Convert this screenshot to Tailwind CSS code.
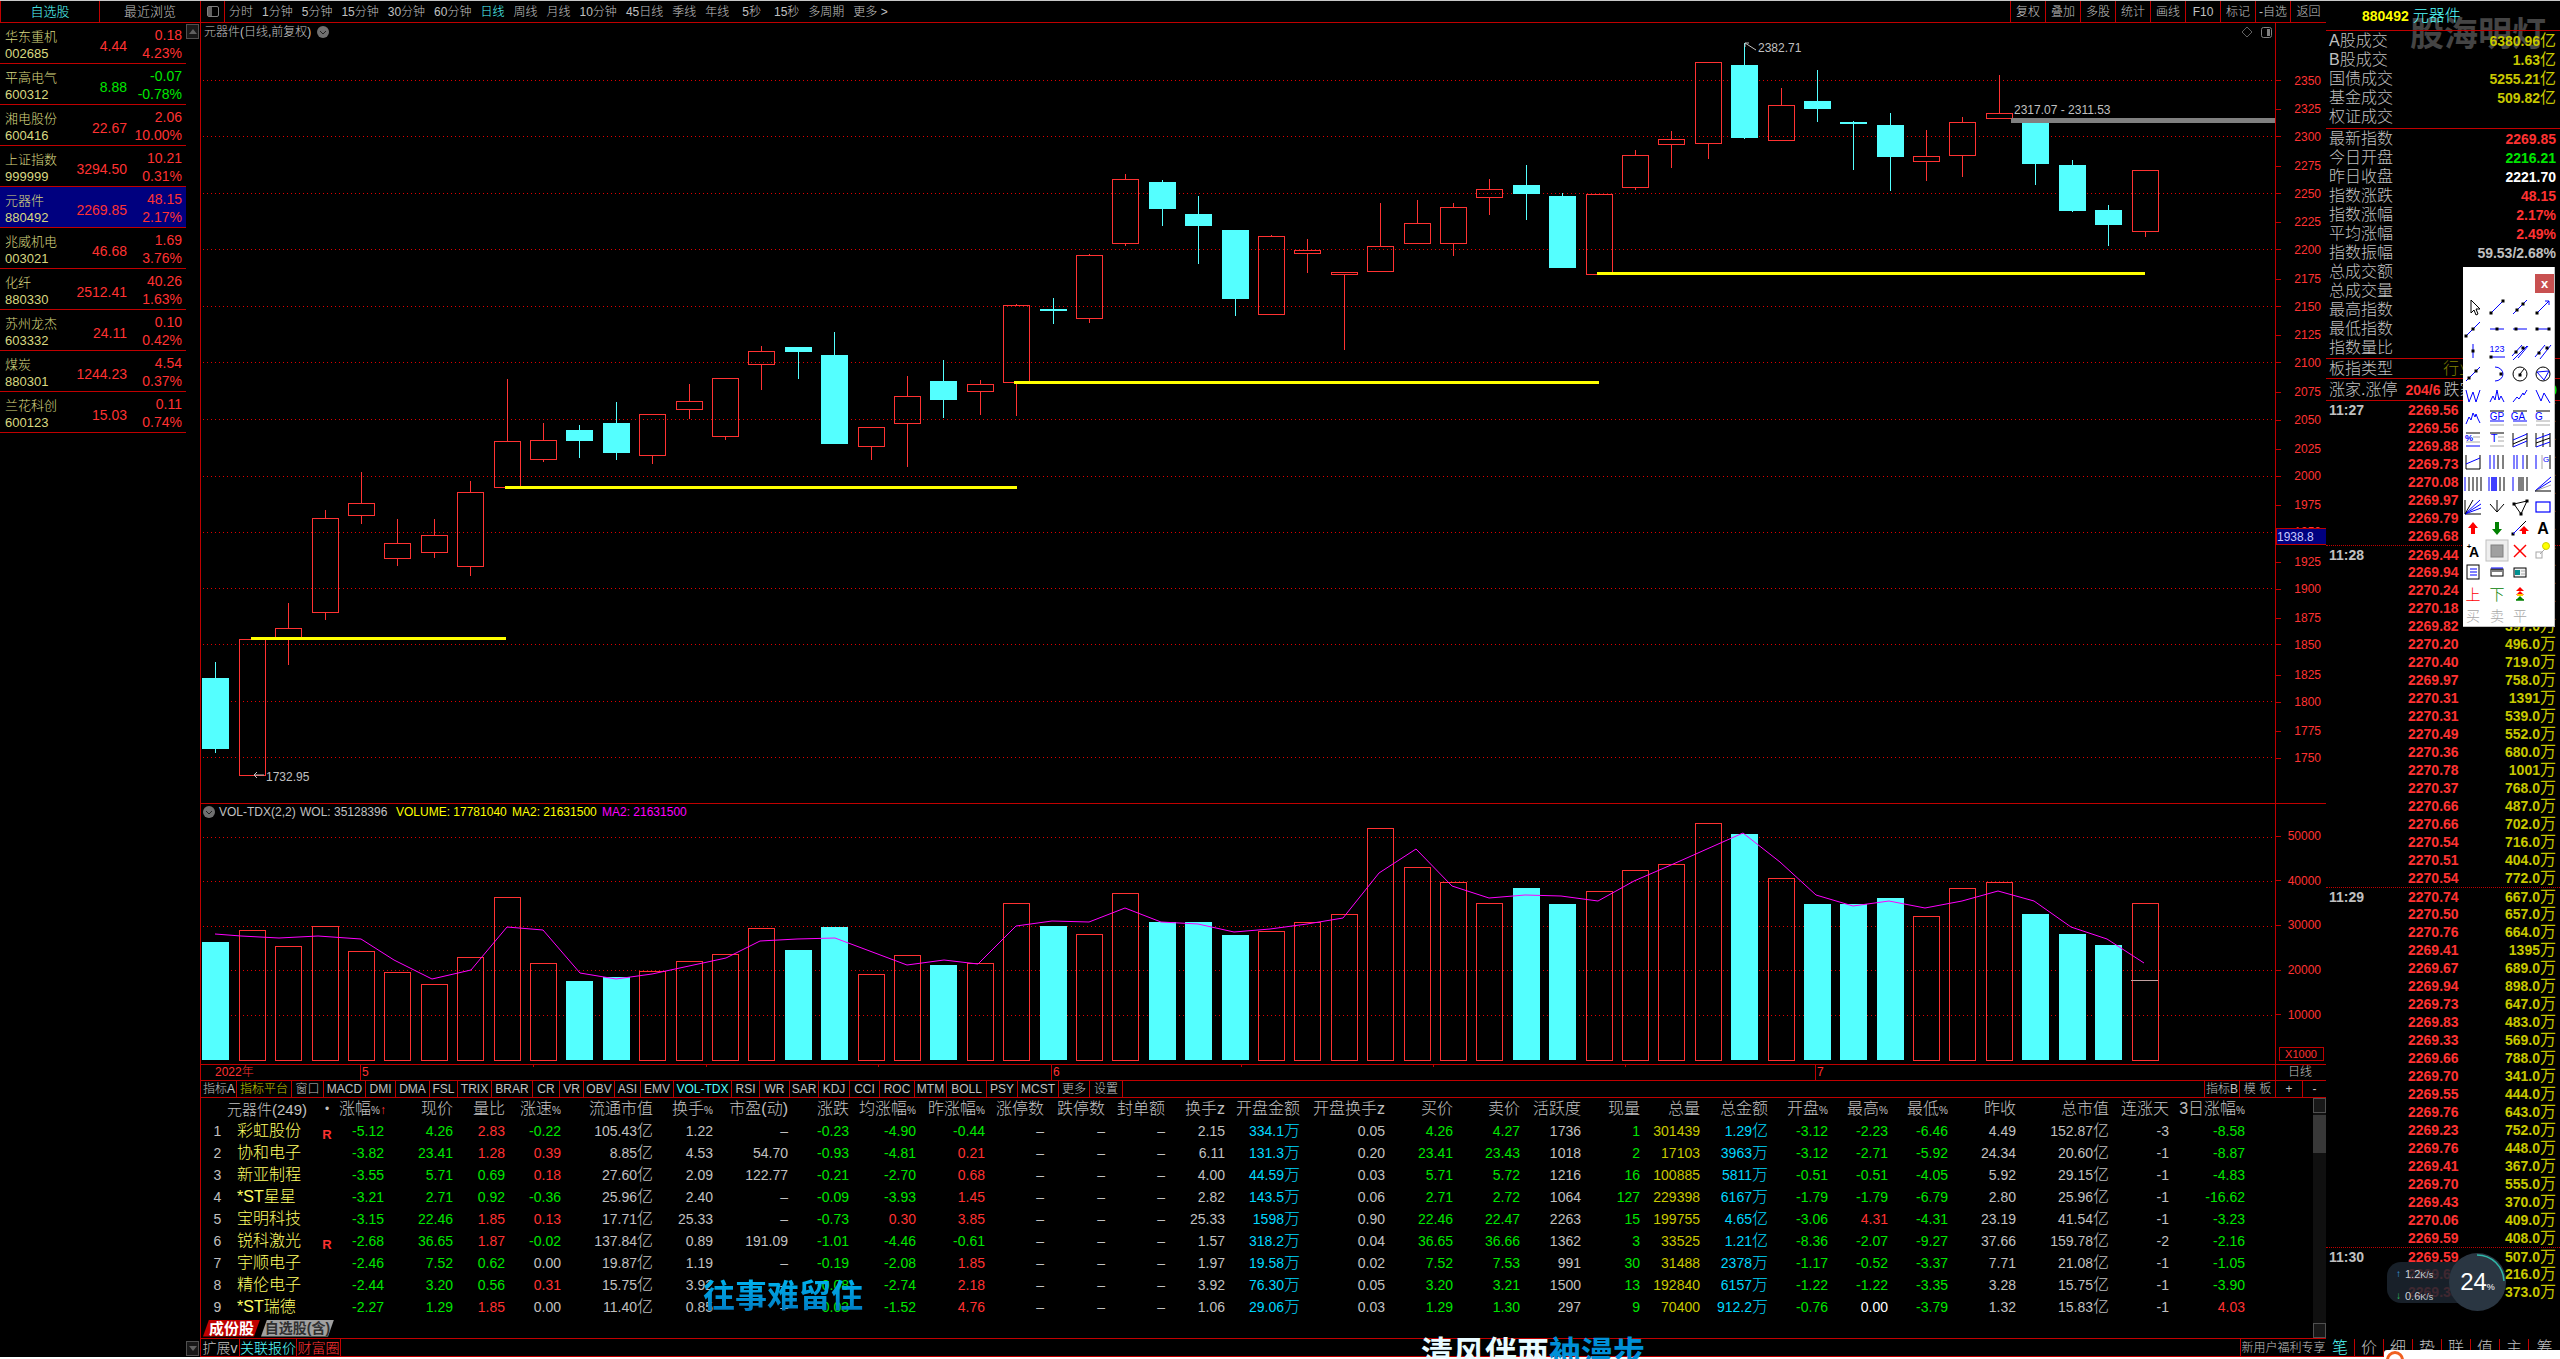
<!DOCTYPE html>
<html lang="zh-CN">
<head>
    <meta charset="UTF-8">
    <title>元器件 日线</title>
    <script src="https://cdn.jsdelivr.net/npm/@tailwindcss/browser@4"></script>
</head>
<body class="bg-black">
<div class="relative w-[2560px] h-[1359px] overflow-hidden flex flex-col bg-black text-[#c0c0c0] text-[12px] leading-none font-light font-['Liberation_Sans','Noto_Sans_CJK_SC',sans-serif]">
    <div class="h-[1px] bg-[#c8c8c8]"></div>

    <div class="flex flex-1 min-h-0">
        <!-- left: watch list -->
        <div class="w-[201px] shrink-0 flex flex-col border-r border-[#c00000]">
            <div class="flex h-[22px] shrink-0 border-b border-[#c00000] text-[13px]">
                <div class="w-[100px] flex items-center justify-center border-l border-r border-[#c00000] text-[#54ffff]">自选股</div>
                <div class="flex-1 flex items-center justify-center">最近浏览</div>
            </div>
            <div class="flex flex-1 min-h-0">
                <div id="watchList" class="w-[186px] flex flex-col"></div>
                <div class="flex-1 flex flex-col justify-between items-end">
                    <div class="w-[13px] h-[15px] mt-[1px] mr-[1px] border border-[#505050] bg-[#181818] flex items-center justify-center"><div class="w-0 h-0 border-x-[4px] border-x-transparent border-b-[5px] border-b-[#606060]"></div></div>
                    <div class="w-[13px] h-[15px] mb-[1px] mr-[1px] border border-[#505050] bg-[#181818] flex items-center justify-center"><div class="w-0 h-0 border-x-[4px] border-x-transparent border-t-[5px] border-t-[#606060]"></div></div>
                </div>
            </div>
        </div>

        <!-- center -->
        <div class="w-[2125px] shrink-0 flex flex-col border-b border-[#c00000]">
            <div class="flex items-center h-[22px] shrink-0 border-b border-[#c00000]">
                <div class="w-[24px] h-full flex items-center justify-center border-r border-[#c00000]">
                    <div class="w-[12px] h-[11px] ml-[1px] rounded-[2px] border border-[#808080] flex"><div class="w-[4px] h-full bg-[#606060]"></div></div>
                </div>
                <div class="flex items-center gap-[9px] ml-[4px]">
                    <span>分时</span><span>1分钟</span><span>5分钟</span><span>15分钟</span><span>30分钟</span><span>60分钟</span><span class="text-[#54ffff]">日线</span><span>周线</span><span>月线</span><span>10分钟</span><span>45日线</span><span>季线</span><span>年线</span><span class="ml-[4px]">5秒</span><span class="ml-[4px]">15秒</span><span>多周期</span><span>更多 &gt;</span>
                </div>
                <div class="ml-auto flex h-full">
                    <span class="w-[35px] flex items-center justify-center border-l border-[#c00000]">复权</span>
                    <span class="w-[35px] flex items-center justify-center border-l border-[#c00000]">叠加</span>
                    <span class="w-[35px] flex items-center justify-center border-l border-[#c00000]">多股</span>
                    <span class="w-[35px] flex items-center justify-center border-l border-[#c00000]">统计</span>
                    <span class="w-[35px] flex items-center justify-center border-l border-[#c00000]">画线</span>
                    <span class="w-[35px] flex items-center justify-center border-l border-[#c00000]">F10</span>
                    <span class="w-[35px] flex items-center justify-center border-l border-[#c00000]">标记</span>
                    <span class="w-[35px] flex items-center justify-center border-l border-[#c00000]">-自选</span>
                    <span class="w-[36px] flex items-center justify-center border-l border-[#c00000]">返回</span>
                </div>
            </div>

            <!-- chart canvas, svg uses page coordinates -->
            <svg id="chart" class="shrink-0 block" width="2125" height="1057" viewBox="201 23 2125 1057"></svg>

            <div id="indicatorTabs" class="flex h-[17px] shrink-0 border-t border-[#c00000] pl-[1px]"></div>

            <div id="stockTable" class="h-[221px] shrink-0 border-t border-[#c00000] relative"></div>

            <div class="flex h-[20px] shrink-0 items-center pl-[2px] gap-[1px] text-[15px] font-bold">
                <span class="w-[57px] h-[17px] bg-[#c00000] text-white flex items-center justify-center [clip-path:polygon(6px_0,100%_0,calc(100%-6px)_100%,0_100%)]">成份股</span>
                <span class="w-[73px] h-[17px] bg-[#a0a0a0] text-[#303030] flex items-center justify-center whitespace-nowrap text-[14px] [clip-path:polygon(6px_0,100%_0,calc(100%-6px)_100%,0_100%)]">自选股(含)</span>
            </div>

            <div class="flex h-[18px] shrink-0 border-t border-[#c00000] text-[16px]">
                <span class="w-[39px] flex items-center justify-center border-r border-[#c00000] text-[14px]">扩展v</span>
                <span class="w-[57px] flex items-center justify-center border-r border-[#c00000] text-[#54ffff] text-[14px]">关联报价</span>
                <span class="w-[44px] flex items-center justify-center border-r border-[#c00000] text-[#ff3232] text-[14px]">财富圈</span>
                <span class="ml-auto w-[86px] flex items-center justify-center border-l border-[#c00000] text-[12px]">新用户福利专享</span>
            </div>
        </div>

        <!-- right: index detail -->
        <div class="relative flex-1 min-w-0 flex flex-col">
            <div class="absolute left-[84px] top-[14px] text-[34px] leading-[38px] font-bold text-[#444444] whitespace-nowrap">股海明灯</div>
            <div class="relative h-[30px] shrink-0 border-b border-[#c00000] flex items-center pl-[36px] gap-[4px]">
                <span class="text-[14px] font-bold text-[#ffff00]">880492</span><span class="text-[16px] text-[#54ffff]">元器件</span>
            </div>
            <div id="infoRows" class="relative shrink-0"></div>
            <div id="minuteList" class="relative flex-1 min-h-0 overflow-hidden"></div>
            <div class="flex h-[18px] shrink-0 text-[16px] border-b border-[#c00000]">
                <span class="w-[28px] flex items-center justify-center text-[#54ffff]">笔</span>
                <span class="w-[29px] flex items-center justify-center border-l border-[#c00000]">价</span>
                <span class="w-[29px] flex items-center justify-center border-l border-[#c00000]">细</span>
                <span class="w-[29px] flex items-center justify-center border-l border-[#c00000]">势</span>
                <span class="w-[29px] flex items-center justify-center border-l border-[#c00000]">联</span>
                <span class="w-[29px] flex items-center justify-center border-l border-[#c00000]">值</span>
                <span class="w-[29px] flex items-center justify-center border-l border-[#c00000]">主</span>
                <span class="flex-1 flex items-center justify-center border-l border-[#c00000]">筹</span>
            </div>
        </div>
    </div>
    <div class="h-[2px] bg-white"></div>

    <!-- drawing toolbox -->
    <div class="absolute left-[2463px] top-[267px] w-[92px] h-[360px] bg-white border-r border-b border-[#c0c0c0]">
        <div class="absolute left-[72px] top-[7px] w-[19px] h-[19px] bg-[#c85050] text-white text-[13px] font-bold flex items-center justify-center">x</div>
        <svg id="toolIcons" class="block" width="92" height="360" viewBox="0 0 92 360"></svg>
    </div>

    <!-- lyrics overlay -->
    <div class="absolute left-[703px] top-[1279px] text-[32px] leading-[34px] font-bold whitespace-nowrap bg-linear-to-b from-[#00b4f0] to-[#0078c0] bg-clip-text text-transparent">往事难留住</div>
    <div class="absolute left-[1421px] top-[1336px] text-[32px] leading-[34px] font-bold whitespace-nowrap"><span class="text-[#e8fbff]">清风伴两</span><span class="text-[#0090d8]">袖漫步</span></div>

    <!-- network speed widget -->
    <div class="absolute left-[2387px] top-[1262px] w-[100px] h-[41px] rounded-[14px] bg-[#1c2630]/85 text-[#c8d0d8] text-[11px]">
        <div class="flex items-center gap-[4px] ml-[9px] mt-[5px] h-[14px]"><span class="text-[#3aa0e8] text-[10px] font-bold">↑</span><span>1.2<span class="text-[9px]">K/s</span></span></div>
        <div class="flex items-center gap-[4px] ml-[9px] mt-[8px] h-[14px]"><span class="text-[#30c060] text-[10px] font-bold">↓</span><span>0.6<span class="text-[9px]">K/s</span></span></div>
    </div>
    <div class="absolute left-[2449px] top-[1253px] w-[57px] h-[58px] rounded-full bg-[#2a3642] flex items-center justify-center text-white">
        <span class="text-[24px] font-light">24</span><span class="text-[9px] mt-[10px]">%</span>
        <svg class="absolute left-0 top-0" width="57" height="58" viewBox="0 0 57 58"><path d="M28 2 A27 27 0 0 1 55 28" fill="none" stroke="#2fb8a8" stroke-width="1.5"/></svg>
    </div>

    <!-- tray notification peeking in -->
    <div class="absolute left-[2384px] top-[1350px] w-[176px] h-[9px] bg-white rounded-tl-[3px] overflow-hidden">
        <div class="absolute left-[2px] top-[1px] w-[18px] h-[18px] rounded-full border-[3px] border-[#f06020]"></div>
    </div>
</div>

<script>
var RED = '#ff3232', CYAN = '#54ffff', LINE = '#c00000', GREEN = '#00e600', YEL = '#c8c800';

// ---- watch list
var watch = [
    ['华东重机','002685','4.44','0.18','4.23%',1],
    ['平高电气','600312','8.88','-0.07','-0.78%',0],
    ['湘电股份','600416','22.67','2.06','10.00%',1],
    ['上证指数','999999','3294.50','10.21','0.31%',1],
    ['元器件','880492','2269.85','48.15','2.17%',1],
    ['兆威机电','003021','46.68','1.69','3.76%',1],
    ['化纤','880330','2512.41','40.26','1.63%',1],
    ['苏州龙杰','603332','24.11','0.10','0.42%',1],
    ['煤炭','880301','1244.23','4.54','0.37%',1],
    ['兰花科创','600123','15.03','0.11','0.74%',1]
];
document.getElementById('watchList').innerHTML = watch.map(function (w, i) {
    var c = w[5] ? 'text-[#ff3232]' : 'text-[#00e600]';
    var bg = i == 4 ? 'bg-[#00007f]' : '';
    return '<div class="h-[41px] shrink-0 flex border-b border-[#c00000] ' + bg + '">' +
        '<div class="w-[70px] pl-[5px] pt-[5px] text-[#d8d880]"><div class="text-[13px] h-[18px] leading-[18px] whitespace-nowrap">' + w[0] + '</div><div class="text-[13px] h-[15px] leading-[15px]">' + w[1] + '</div></div>' +
        '<div class="w-[57px] text-right text-[14px] pt-[15px] leading-[16px] ' + c + '">' + w[2] + '</div>' +
        '<div class="flex-1 text-right pr-[4px] pt-[4px] text-[14px] ' + c + '"><div class="h-[18px] leading-[16px]">' + w[3] + '</div><div class="h-[16px] leading-[16px]">' + w[4] + '</div></div>' +
        '</div>';
}).join('');

// ---- chart
var h = '';
function ln(x1, y1, x2, y2, c, w, dash) {
    return '<line x1="' + x1 + '" y1="' + y1 + '" x2="' + x2 + '" y2="' + y2 + '" stroke="' + c + '" stroke-width="' + (w || 1) + '"' + (dash ? ' stroke-dasharray="' + dash + '"' : '') + ' shape-rendering="crispEdges"/>';
}
function tx(x, y, s, c, anchor, size) {
    return '<text x="' + x + '" y="' + y + '" fill="' + c + '" font-size="' + (size || 12) + '" dominant-baseline="central"' + (anchor ? ' text-anchor="' + anchor + '"' : '') + '>' + s + '</text>';
}
// price grid + axis
[80.5,136.5,193.5,249.5,306.5,362.5,419.5,476.5,532.5,588.5,644.5,701.5,757.5].forEach(function (y) { h += ln(203, y, 2275, y, '#e00000', 1, '1 3'); });
[837.5,881.5,926.5,970.5,1015.5].forEach(function (y) { h += ln(203, y, 2275, y, '#e00000', 1, '1 3'); });
h += ln(2275.5, 23, 2275.5, 1080, LINE);
var axis = [[2350,80.5],[2325,109],[2300,136.5],[2275,166],[2250,193.5],[2225,222],[2200,249.5],[2175,279],[2150,306.5],[2125,335],[2100,362.5],[2075,392],[2050,420],[2025,449],[2000,476],[1975,505],[1950,532],[1925,562],[1900,589],[1875,618],[1850,644.5],[1825,675],[1800,702],[1775,731],[1750,758]];
axis.forEach(function (a) {
    h += ln(2276, Math.floor(a[1]) + .5, 2281, Math.floor(a[1]) + .5, LINE);
    h += tx(2321, a[1], a[0], RED, 'end');
});
[[50000,836],[40000,880.5],[30000,925],[20000,970],[10000,1014.5]].forEach(function (a) {
    h += ln(2276, Math.floor(a[1]) + .5, 2281, Math.floor(a[1]) + .5, LINE);
    h += tx(2321, a[1], a[0], RED, 'end');
});

// candles: hi, top, bot, lo, cyan
var k = [
 [662,678,749,753,1],[638.5,638.5,775,775,0],[603,628,637,665,0],[510,518,612,620,0],[472,503,515,524,0],[519,543,558,566,0],
 [519,535,552,558,0],[481,492,566,576,0],[379,441,487,487,0],[423,440,459,462,0],[425,430,441,458,1],[402,423,453,460,1],
 [414,414,455,464,0],[384,401,409,419,0],[378,378,436,440,0],[346,351,364,390,0],[347,347,352,379,1],[332,355,444,444,1],
 [427,427,446,460,0],[376,396,423,467,0],[360,381,400,418,1],[380,384,391,415,0],[304,305,382,416,0],[298,309,311,324,1],
 [254,255,318,323,0],[174,179,243,246,0],[180,182,209,226,1],[196,214,226,264,1],[230,230,299,316,1],[235,236,314,315,0],
 [239,250,253,273,0],[272,272,274,350,0],[203,246,271,271,0],[200,223,243,243,0],[203,207,243,256,0],[179,189,197,215,0],
 [165,185,194,220,1],[193,196,268,268,1],[194,194,274,274,0],[150,155,187,190,0],[131,139,144,168,0],[62,62,143,159,0],
 [43,65,138,139,1],[88,105,140,140,0],[70,101,109,122,1],[121,122,124,170,1],[113,125,157,191,1],[130,156,161,181,0],
 [117,122,155,177,0],[75,113,118,118,0],[118,118,164,185,1],[160,165,211,212,1],[205,210,225,246,1],[170,170,231,237,0]
];
// volume bar tops
var vol = [942,930,946,926,951,972,984,957,897,963,981,977,971,961,954,928,950,927,974,955,965,963,903,926,934,893,922,922,935,931,922,914,828,867,882,903,888,904,891,870,864,823,834,878,904,904,898,916,888,882,914,934,945,903];
function cx(i) { return Math.round(215.3 + 36.4 * i); }
k.forEach(function (c, i) {
    var x = cx(i), col = c[4] ? CYAN : RED;
    h += ln(x + .5, c[0], x + .5, c[1], col);
    h += ln(x + .5, c[2], x + .5, c[3], col);
    if (c[4]) h += '<rect x="' + (x - 13) + '" y="' + c[1] + '" width="27" height="' + (c[2] - c[1]) + '" fill="' + col + '" shape-rendering="crispEdges"/>';
    else h += '<rect x="' + (x - 13 + .5) + '" y="' + (c[1] + .5) + '" width="26" height="' + (c[2] - c[1]) + '" fill="none" stroke="' + col + '" shape-rendering="crispEdges"/>';
    // volume
    var t = vol[i];
    if (c[4]) h += '<rect x="' + (x - 13) + '" y="' + t + '" width="27" height="' + (1060 - t) + '" fill="' + col + '" shape-rendering="crispEdges"/>';
    else h += '<rect x="' + (x - 13 + .5) + '" y="' + (t + .5) + '" width="26" height="' + (1060 - t) + '" fill="none" stroke="' + col + '" shape-rendering="crispEdges"/>';
});
h += ln(2131, 980.5, 2158, 980.5, '#c0a0a0');

// support lines
[[251,506,638.5],[505,1017,487.5],[1014,1599,382.5],[1597,2145,273.5]].forEach(function (s) { h += ln(s[0], s[2], s[1], s[2], '#ffff00', 3); });
h += '<rect x="2011" y="118" width="264" height="5" fill="#808080"/>';
h += tx(2014, 110, '2317.07 - 2311.53', '#c0c0c0');
h += tx(266, 777, '1732.95', '#c0c0c0') + '<path d="M264 775H254M257 772L254 775L257 778" fill="none" stroke="#c0c0c0"/>';
h += tx(1758, 48, '2382.71', '#c0c0c0') + '<path d="M1745 43L1756 50M1745 43V47M1745 43H1749" fill="none" stroke="#c0c0c0"/>';

// ma line
var ma = [[215,934],[241,936],[279,938],[318,936],[361,939],[394,960],[432,979],[471,970],[507,927],[543,930],[580,973],[616,979],[652,974],[726,958],[760,941],[797,939],[835,938],[907,965],[944,960],[978,964],[1016,926],[1052,921],[1089,922],[1125,908],[1161,922],[1198,924],[1234,932],[1270,929],[1307,924],[1343,918],[1379,873],[1416,849],[1452,886],[1489,898],[1525,895],[1561,896],[1598,901],[1634,881],[1671,865],[1707,849],[1743,833],[1780,862],[1816,895],[1853,906],[1889,901],[1925,908],[1962,901],[1998,891],[2034,901],[2071,927],[2107,939],[2144,963]];
h += '<polyline points="' + ma.map(function (p) { return p.join(','); }).join(' ') + '" fill="none" stroke="#ff00ff" stroke-width="1"/>';

// titles
h += tx(204, 32, '元器件(日线,前复权)', '#c0c0c0');
h += '<circle cx="323" cy="32" r="6" fill="#707070"/><path d="M320 31l3 3 3-3" fill="none" stroke="#202020"/>';
h += '<path d="M2247 27l5 5-5 5-5-5z" fill="none" stroke="#606060"/>';
h += '<rect x="2261.5" y="27.5" width="10" height="10" rx="2" fill="none" stroke="#808080"/><rect x="2267" y="29" width="3" height="7" fill="#808080"/>';
h += ln(201, 803.5, 2326, 803.5, LINE);
h += '<circle cx="209" cy="812" r="6" fill="#707070"/><path d="M206 811l3 3 3-3" fill="none" stroke="#202020"/>';
h += tx(219, 812, 'VOL-TDX(2,2)', '#c0c0c0') + tx(300, 812, 'WOL: 35128396', '#c0c0c0') + tx(396, 812, 'VOLUME: 17781040', '#ffff00') + tx(512, 812, 'MA2: 21631500', '#ffff00') + tx(602, 812, 'MA2: 21631500', '#ff00ff');

// price marker
h += '<rect x="2276" y="528.5" width="50" height="16" fill="#00007f" stroke="' + LINE + '" shape-rendering="crispEdges"/>';
h += tx(2277, 537, '1938.8', '#c8c8ff');
// x1000 box
h += '<rect x="2279.5" y="1047.5" width="44" height="13" fill="none" stroke="' + LINE + '"/>' + tx(2301, 1054, 'X1000', RED, 'middle', 11);

// date row
h += ln(201, 1064.5, 2326, 1064.5, LINE);
h += tx(215, 1072, '2022年', RED);
[[360,'5'],[1051,'6'],[1815,'7']].forEach(function (d) { h += ln(d[0] + .5, 1064, d[0] + .5, 1080, LINE) + tx(d[0] + 2, 1072, d[1], RED); });
[533,706,878,1241,1433,1625].forEach(function (x) { h += ln(x + .5, 1064, x + .5, 1067, LINE); });
h += tx(2300, 1072, '日线', '#c0c0c0', 'middle');
document.getElementById('chart').innerHTML = h;

// ---- indicator tabs
var tabs = [['指标A','w-[35px]'],['指标平台','w-[55px] text-[#c8c800]'],['窗口','w-[32px]'],['MACD','w-[42px]'],['DMI','w-[30px]'],['DMA','w-[34px]'],['FSL','w-[28px]'],['TRIX','w-[34px]'],['BRAR','w-[41px]'],['CR','w-[27px]'],['VR','w-[24px]'],['OBV','w-[31px]'],['ASI','w-[26px]'],['EMV','w-[33px]'],['VOL-TDX','w-[58px] text-[#54ffff]'],['RSI','w-[28px]'],['WR','w-[30px]'],['SAR','w-[29px]'],['KDJ','w-[31px]'],['CCI','w-[30px]'],['ROC','w-[35px]'],['MTM','w-[32px]'],['BOLL','w-[40px]'],['PSY','w-[31px]'],['MCST','w-[41px]'],['更多','w-[31px]'],['设置','w-[33px]']];
var tabHtml = tabs.map(function (t) {
    return '<span class="flex items-center justify-center whitespace-nowrap border-r border-[#c00000] ' + t[1] + '">' + t[0] + '</span>';
}).join('');
tabHtml += '<span class="ml-auto w-[35px] flex items-center justify-center border-l border-[#c00000]">指标B</span><span class="w-[36px] flex items-center justify-center border-l border-[#c00000]">模 板</span><span class="w-[27px] flex items-center justify-center border-l border-[#c00000]">+</span><span class="w-[24px] flex items-center justify-center border-l border-[#c00000]">-</span>';
document.getElementById('indicatorTabs').innerHTML = tabHtml;

// ---- stock table
var pct = function (s) { return s + '<span class="text-[10px]">%</span>'; };
var heads = [pct('涨幅') + '<span class="text-[#ff3232] text-[12px]">↑</span>','现价','量比',pct('涨速'),'流通市值',pct('换手'),'市盈(动)','涨跌',pct('均涨幅'),pct('昨涨幅'),'涨停数','跌停数','封单额','换手z','开盘金额','开盘换手z','买价','卖价','活跃度','现量','总量','总金额',pct('开盘'),pct('最高'),pct('最低'),'昨收','总市值','连涨天',pct('3日涨幅')];
var types = ['s','b','q','z','g','g','g','s','s','s','g','g','g','g','c','g','b','b','g','b','y','c','s','s','s','g','g','g','s'];
var rows = [
 ['彩虹股份',1,'-5.12 4.26 2.83 -0.22 105.43亿 1.22 - -0.23 -4.90 -0.44 - - - 2.15 334.1万 0.05 4.26 4.27 1736 1 301439 1.29亿 -3.12 -2.23 -6.46 4.49 152.87亿 -3 -8.58'],
 ['协和电子',0,'-3.82 23.41 1.28 0.39 8.85亿 4.53 54.70 -0.93 -4.81 0.21 - - - 6.11 131.3万 0.20 23.41 23.43 1018 2 17103 3963万 -3.12 -2.71 -5.92 24.34 20.60亿 -1 -8.87'],
 ['新亚制程',0,'-3.55 5.71 0.69 0.18 27.60亿 2.09 122.77 -0.21 -2.70 0.68 - - - 4.00 44.59万 0.03 5.71 5.72 1216 16 100885 5811万 -0.51 -0.51 -4.05 5.92 29.15亿 -1 -4.83'],
 ['<b>*ST</b>星星',0,'-3.21 2.71 0.92 -0.36 25.96亿 2.40 - -0.09 -3.93 1.45 - - - 2.82 143.5万 0.06 2.71 2.72 1064 127 229398 6167万 -1.79 -1.79 -6.79 2.80 25.96亿 -1 -16.62'],
 ['宝明科技',0,'-3.15 22.46 1.85 0.13 17.71亿 25.33 - -0.73 0.30 3.85 - - - 25.33 1598万 0.90 22.46 22.47 2263 15 199755 4.65亿 -3.06 4.31 -4.31 23.19 41.54亿 -1 -3.23'],
 ['锐科激光',1,'-2.68 36.65 1.87 -0.02 137.84亿 0.89 191.09 -1.01 -4.46 -0.61 - - - 1.57 318.2万 0.04 36.65 36.66 1362 3 33525 1.21亿 -8.36 -2.07 -9.27 37.66 159.78亿 -2 -2.16'],
 ['宇顺电子',0,'-2.46 7.52 0.62 0.00 19.87亿 1.19 - -0.19 -2.08 1.85 - - - 1.97 19.58万 0.02 7.52 7.53 991 30 31488 2378万 -1.17 -0.52 -3.37 7.71 21.08亿 -1 -1.05'],
 ['精伦电子',0,'-2.44 3.20 0.56 0.31 15.75亿 3.92 - -0.08 -2.74 2.18 - - - 3.92 76.30万 0.05 3.20 3.21 1500 13 192840 6157万 -1.22 -1.22 -3.35 3.28 15.75亿 -1 -3.90'],
 ['<b>*ST</b>瑞德',0,'-2.27 1.29 1.85 0.00 11.40亿 0.85 - -0.03 -1.52 4.76 - - - 1.06 29.06万 0.03 1.29 1.30 297 9 70400 912.2万 -0.76 0.00 -3.79 1.32 15.83亿 -1 4.03']
];
function cellColor(v, t) {
    var n = parseFloat(v);
    if (v == '-') return 'text-[#c0c0c0]';
    if (t == 's') return n < 0 ? 'text-[#00e600]' : n > 0 ? 'text-[#ff3232]' : 'text-white';
    if (t == 'z') return n < 0 ? 'text-[#00e600]' : n > 0 ? 'text-[#ff3232]' : 'text-[#c0c0c0]';
    if (t == 'q') return n >= 1 ? 'text-[#ff3232]' : 'text-[#00e600]';
    if (t == 'b') return 'text-[#00e600]';
    if (t == 'y') return 'text-[#c8c800]';
    if (t == 'c') return 'text-[#00d8ff]';
    return 'text-[#c0c0c0]';
}
var gridCols = 'grid grid-cols-[32px_82px_24px_45px_69px_52px_56px_92px_60px_75px_61px_67px_69px_59px_61px_60px_60px_75px_85px_68px_67px_61px_59px_60px_68px_60px_60px_60px_68px_93px_60px_76px]';
var tb = '<div class="' + gridCols + ' h-[22px] items-center text-[16px] whitespace-nowrap"><span></span><span class="col-span-1 -ml-[6px] text-[15px]">元器件(249)</span><span class="text-center text-[12px]">•</span>';
heads.forEach(function (x) { tb += '<span class="text-right">' + x + '</span>'; });
tb += '</div>';
rows.forEach(function (r, i) {
    tb += '<div class="' + gridCols + ' h-[22px] items-center text-[14px] whitespace-nowrap">';
    tb += '<span class="text-center pl-[1px]">' + (i + 1) + '</span>';
    tb += '<span class="pl-[4px] text-[16px] text-[#ffff64]">' + r[0] + '</span>';
    tb += '<span class="text-center text-[13px] font-bold text-[#ff3232] pt-[6px]">' + (r[1] ? 'R' : '') + '</span>';
    r[2].split(' ').forEach(function (v, j) {
        var col = cellColor(v, types[j]);
        var val = v == '-' ? '–' : v.replace(/([亿万])/, '<span class="text-[16px]">$1</span>');
        tb += '<span class="text-right ' + col + '">' + val + '</span>';
    });
    tb += '</div>';
});
tb += '<div class="absolute right-0 top-0 bottom-[-20px] w-[13px] bg-[#101010] flex flex-col justify-between"><div class="h-[15px] border border-[#505050] bg-[#181818]"></div><div class="absolute top-[17px] left-0 w-full h-[38px] bg-[#383838]"></div><div class="h-[15px] border border-[#505050] bg-[#181818]"></div></div>';
document.getElementById('stockTable').innerHTML = tb;

// ---- right info rows
var info = [
 ['A股成交','6380.96亿','y',0],['B股成交','1.63亿','y',0],['国债成交','5255.21亿','y',0],['基金成交','509.82亿','y',0],['权证成交','','y','pb-[2px] border-b border-[#c00000] box-content'],
 ['最新指数','2269.85','r',0],['今日开盘','2216.21','g',0],['昨日收盘','2221.70','w',0],['指数涨跌','48.15','r',0],['指数涨幅','2.17%','r',0],['平均涨幅','2.49%','r',0],['指数振幅','59.53/2.68%','n',0],['总成交额','','y',0],['总成交量','','y',0],['最高指数','','y',0],['最低指数','','y',0],['指数量比','','y','pb-[1px] border-b border-[#c00000] box-content']
];
var vc = { y: 'text-[#c8c800]', r: 'text-[#ff3232]', g: 'text-[#00e600]', w: 'text-white', n: 'text-[#c0c0c0]' };
var ih = '';
info.forEach(function (r) {
    var v = r[1].replace(/([亿万])/, '<span class="text-[16px] font-normal">$1</span>');
    ih += '<div class="h-[19px] flex items-center justify-between pl-[3px] pr-[4px] text-[16px] ' + (r[3] || '') + '"><span>' + r[0] + '</span><span class="text-[14px] font-bold ' + vc[r[2]] + '">' + v + '</span></div>';
});
ih += '<div class="h-[19px] flex items-center pl-[3px] text-[16px] border-b border-[#c00000] box-content"><span>板指类型</span><span class="ml-[50px] text-[#808000]">行业</span></div>';
ih += '<div class="h-[21px] flex items-center pl-[3px] pr-[3px] text-[16px] border-b border-[#c00000] box-content"><span>涨家.涨停</span><span class="ml-[8px] text-[14px] font-bold text-[#ff3232]">204/6</span><span class="ml-[3px]">跌家</span><span class="ml-auto text-[14px] font-bold text-[#00e600]">0</span></div>';
document.getElementById('infoRows').innerHTML = ih;

// ---- minute list
var mins = '2269.56 2269.56 2269.88 2269.73 2270.08 2269.97 2269.79 2269.68 2269.44 2269.94 2270.24 2270.18 2269.82 2270.20 2270.40 2269.97 2270.31 2270.31 2270.49 2270.36 2270.78 2270.37 2270.66 2270.66 2270.54 2270.51 2270.54 2270.74 2270.50 2270.76 2269.41 2269.67 2269.94 2269.73 2269.83 2269.33 2269.66 2269.70 2269.55 2269.76 2269.23 2269.76 2269.41 2269.70 2269.43 2270.06 2269.59 2269.59 2269.60 2269.35'.split(' ');
var vols = '612.0万 420.0万 555.0万 480.0万 530.0万 610.0万 498.0万 512.0万 640.0万 580.0万 470.0万 602.0万 397.0万 496.0万 719.0万 758.0万 1391万 539.0万 552.0万 680.0万 1001万 768.0万 487.0万 702.0万 716.0万 404.0万 772.0万 667.0万 657.0万 664.0万 1395万 689.0万 898.0万 647.0万 483.0万 569.0万 788.0万 341.0万 444.0万 643.0万 752.0万 448.0万 367.0万 555.0万 370.0万 409.0万 408.0万 507.0万 216.0万 373.0万'.split(' ');
var times = { 0: '11:27', 8: '11:28', 27: '11:29', 47: '11:30' };
document.getElementById('minuteList').innerHTML = mins.map(function (m, i) {
    var t = times[i], dot = t && i ? ' border-t border-dotted border-[#c00000]' : '';
    return '<div class="h-[18px] flex items-center text-[14px] font-bold' + dot + '">' +
        '<span class="w-[82px] pl-[3px] text-[#c0c0c0]">' + (t || '') + '</span>' +
        '<span class="w-[50px] text-right text-[#ff3232] whitespace-nowrap">' + m + '</span>' +
        '<span class="flex-1 text-right pr-[4px] text-[#c8c800]">' + vols[i].replace('万', '<span class="text-[16px] font-normal">万</span>') + '</span></div>';
}).join('');

// ---- toolbox icons
var B = '#0000ff', K = '#000000', G = '#a8a8a8';
function l(a, b, c, d, col, w) { return '<line x1="' + a + '" y1="' + b + '" x2="' + c + '" y2="' + d + '" stroke="' + (col || B) + '" stroke-width="' + (w || 1) + '"/>'; }
function p(pts, col, w) { return '<polyline points="' + pts + '" fill="none" stroke="' + (col || B) + '" stroke-width="' + (w || 1) + '"/>'; }
function s(x, y) { return '<rect x="' + (x - 1.5) + '" y="' + (y - 1.5) + '" width="3" height="3" fill="#000"/>'; }
function w(x, y, t, col, size, bold) { return '<text x="' + x + '" y="' + y + '" fill="' + col + '" font-size="' + size + '" text-anchor="middle" dominant-baseline="central"' + (bold ? ' font-weight="bold"' : '') + '>' + t + '</text>'; }
var vl = function (xs, col, wd) { return xs.map(function (x) { return l(x, -7, x, 7, col, wd); }).join(''); };
var icons = [
 ['<path d="M-2 -7V6L1 3 3 8 5 7 3 2H7Z" fill="#fff" stroke="#000"/>', l(-6,6,6,-6)+s(-6,6)+s(6,-6), l(-7,7,7,-7)+s(-3,3)+s(3,-3), l(-6,6,6,-6)+s(-6,6)+p('2,-6 6,-6 6,-2')],
 [l(-7,7,7,-7)+s(-7,7)+s(0,0), l(-7,0,7,0)+s(0,0), l(-7,0,7,0)+s(-4,0), l(-7,0,7,0)+s(-6,0)+s(6,0)],
 [l(0,-7,0,7)+s(0,0), w(0,-2,'123',B,9)+l(-6,6,8,6)+s(-6,6), l(-8,5,2,-6)+l(-7,9,7,-5)+l(-2,7,8,-5)+s(-4,1)+s(3,-3), l(-8,6,2,-6)+l(-3,8,8,-6)+s(-4,2)+s(4,-3)],
 [l(-7,7,7,-7,B)+s(-4,4)+s(3,-3), '<path d="M-2 -7A8 7 0 0 1 -2 7" fill="none" stroke="'+B+'"/>'+s(4,0), '<circle r="7" fill="none" stroke="#000"/>'+l(0,0,4,-5,K)+s(0,1), '<circle r="7" fill="none" stroke="#000"/>'+p('-6,-2 6,-3 1,6 -6,-2')],
 [p('-7,-6 -4,6 0,-4 3,6 7,-6'), p('-7,6 -4,0 -2,4 0,-6 2,4 4,0 7,6'), p('-7,6 -3,1 -1,3 3,-3 4,-1 7,-6'), p('-7,-6 -2,5 1,-3 7,7')],
 [p('-7,6 -4,-1 -2,2 0,-5 2,-1 3,-4 5,1 7,5'), w(0,-2,'GP',B,10)+l(-7,-7,7,-7,K)+l(-7,3,7,3)+l(-7,7,7,7,G), w(-2,-2,'GA',B,10)+l(-7,-7,7,-7,K)+l(-7,3,7,3)+l(-7,7,7,7,G), w(-4,-2,'G',B,10)+l(-7,-7,7,-7,K)+l(-7,3,7,3,G)+l(-7,7,7,7,G)],
 [w(-4,-2,'%',B,9,1)+l(-7,-7,7,-7,K)+l(-7,2,7,2,G)+l(-7,6,7,6)+l(0,-3,7,-3,G), w(-3,-2,'T',B,11)+l(-7,-7,7,-7,K)+l(-7,6,7,6,G)+l(1,-3,7,-3,G)+l(1,1,7,1,G), vl([-7,7],K)+l(-7,0,7,-6)+l(-7,4,7,-2,K)+l(-7,7,7,1), vl([-7,0,7],K)+l(-7,-1,7,-6)+l(-7,3,7,-2,K)+l(-7,7,7,2)],
 [vl([-7,7],K)+p('-7,2 7,-4')+l(-7,7,7,7,K), vl([-7,-3])+vl([1,6],K), vl([-6,-3,3])+vl([7],K), vl([-7])+vl([-1],G)+vl([7],K)+w(3,-3,'G',B,8)],
 [vl([-8])+vl([-4,0,4,8],K), vl([-8])+vl([-5,-3,-1],B,1.5)+vl([3,7],K), vl([-7])+vl([-1,1,3],K)+vl([7],K), p('-8,7 8,-7')+p('-8,7 8,-3',B)+p('-8,7 8,1',G)+l(-8,7,8,7,K)],
 [l(-8,-7,-8,7,K)+l(-8,7,8,7,K)+l(-8,7,7,-7)+l(-8,7,8,-3,B)+l(-8,7,8,1,B)+l(-8,7,0,-7,K), p('-7,-3 0,5 7,-3',K)+l(0,-7,0,5,K), p('-6,-3 7,-6 1,7 -6,-3',K)+s(-6,-3)+s(7,-6)+s(1,7), '<rect x="-7" y="-5" width="14" height="10" fill="none" stroke="'+B+'" stroke-width="1.2"/>'],
 ['<path d="M0 -6L5 0H2V6H-2V0H-5Z" fill="#ff0000"/>', '<path d="M0 7L5 1H2V-6H-2V1H-5Z" fill="#008000"/>', l(-7,6,6,-7,K)+s(-7,6)+'<path d="M4 -2L9 3H6V6H2V3H-1Z" fill="#ff0000"/>'+l(-7,6,0,-1), w(0,0,'A',K,16,1)],
 [w(-4,-5,'+',K,8,1)+w(1,1,'A',K,14,1), '<rect x="-11" y="-11" width="22" height="21" fill="#eeeeee" stroke="#c0c0c0"/><rect x="-6" y="-6" width="12" height="12" fill="#a0a0a0" stroke="#808080"/>', l(-6,-6,6,6,'#ff0000',1.5)+l(6,-6,-6,6,'#ff0000',1.5), '<rect x="-7" y="1" width="6" height="6" fill="none" stroke="'+G+'"/>'+l(-3,3,4,-4,G)+'<circle cx="3" cy="-5" r="3.5" fill="#ffff00" stroke="#d0d000"/>'],
 ['<rect x="-6" y="-7" width="12" height="14" fill="none" stroke="#000"/>'+l(-3,-3,4,-3)+l(-3,0,4,0)+l(-3,3,4,3), '<rect x="-6" y="-3" width="12" height="7" fill="none" stroke="#000"/>'+[-4,-2,0,2,4].map(function(x){return l(x,-3,x,0,K);}).join('')+l(-6,-4,6,-4,B), '<rect x="-6" y="-4" width="12" height="9" fill="#f4f4f4" stroke="#000"/><rect x="-5" y="-2" width="5" height="5" fill="#009090"/>'+l(1,-1,5,-1,G)+l(1,2,5,2,G), ''],
 [w(0,0,'上','#ff0000',15), w(0,0,'下','#008000',15), '<path d="M0 -7L4 -3H-4Z" fill="#ff0000"/><path d="M0 -3L4 1H-4Z" fill="#ff0000"/>'+'<rect x="-3" y="0" width="6" height="2" fill="#ffcc00"/><path d="M0 2L4 6H-4Z" fill="#008000"/>'+l(-4,6,4,6,'#008000',1.5), ''],
 [w(0,0,'买',G,14), w(0,0,'卖',G,14), w(0,0,'平',G,14), '']
];
var colX = [10, 34, 57, 80], rowY = [40, 62, 84, 107, 129, 151, 173, 195, 217, 240, 261, 284, 305, 327, 349];
document.getElementById('toolIcons').innerHTML = icons.map(function (r, i) {
    return r.map(function (m, j) { return m ? '<g transform="translate(' + colX[j] + ',' + rowY[i] + ')">' + m + '</g>' : ''; }).join('');
}).join('');
</script>
</body>
</html>
